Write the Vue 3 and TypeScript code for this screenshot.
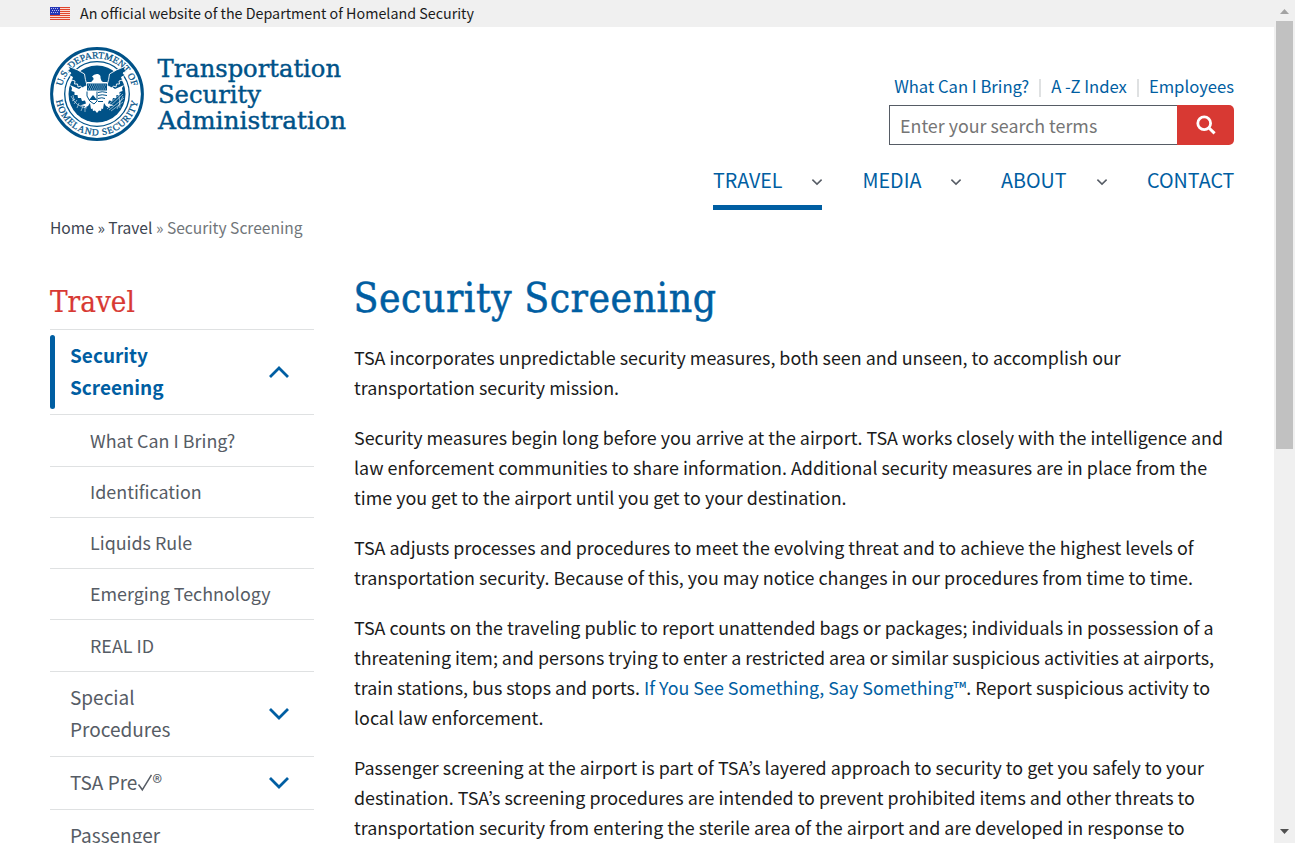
<script setup lang="ts">
interface SideItem { lines: string[]; kind: 'active' | 'child' | 'top'; mark?: string; height: number; arrow?: 'up' | 'down' }

const utility: string[] = ['What Can I Bring?', 'A -Z Index', 'Employees']
const nav = [
  { label: 'TRAVEL', sub: true, width: 109, active: true },
  { label: 'MEDIA', sub: true, width: 98.5, active: false },
  { label: 'ABOUT', sub: true, width: 106, active: false },
  { label: 'CONTACT', sub: false, width: 87, active: false },
]
const side: SideItem[] = [
  { lines: ['Security', 'Screening'], kind: 'active', height: 85, arrow: 'up' },
  { lines: ['What Can I Bring?'], kind: 'child', height: 52 },
  { lines: ['Identification'], kind: 'child', height: 51 },
  { lines: ['Liquids Rule'], kind: 'child', height: 51 },
  { lines: ['Emerging Technology'], kind: 'child', height: 51 },
  { lines: ['REAL ID'], kind: 'child', height: 52 },
  { lines: ['Special', 'Procedures'], kind: 'top', height: 85, arrow: 'down' },
  { lines: ['TSA Pre'], kind: 'top', mark: '®', height: 53, arrow: 'down' },
  { lines: ['Passenger'], kind: 'top', height: 53 },
]
const stripes = [0, 2, 4, 6, 8, 10, 12]
</script>

<template>
  <div class="screen">
    <div class="page">
      <div class="banner">
        <svg class="flag" width="20" height="13" viewBox="0 0 20 13" shape-rendering="crispEdges">
          <rect width="20" height="13" fill="#fbd9d2" />
          <rect v-for="s in stripes" :key="s" x="0" :y="s" width="20" height="1" fill="#e0452c" />
          <rect width="10" height="8" fill="#2536b5" />
          <path d="M1 1.5h8M2 3.5h7M1 5.5h8" stroke="#b8bdf0" stroke-width="1" stroke-dasharray="1 1" />
        </svg>
        <span>An official website of the Department of Homeland Security</span>
      </div>

      <header class="header">
        <div class="brand">
          <svg class="seal" width="94" height="94" viewBox="-47 -47 94 94">
            <defs>
              <path id="arcTop" d="M-35.2 6A35.7 35.7 0 1 1 35.2 6" />
              <path id="arcBottom" d="M-41.4 0A41.4 41.4 0 0 0 41.4 0" />
            </defs>
            <circle r="45.4" fill="#fff" stroke="#005288" stroke-width="3" />
            <circle r="32.3" fill="none" stroke="#005288" stroke-width="1.3" />
            <circle r="28.5" fill="#005288" />
            <text class="ring" text-anchor="middle"><textPath href="#arcTop" startOffset="50%">U.S. DEPARTMENT OF</textPath></text>
            <text class="ring bottom" text-anchor="middle"><textPath href="#arcBottom" startOffset="50%">HOMELAND SECURITY</textPath></text>
            <g fill="#fff">
              <path d="M-27-9L-25-6-25.500-3-22.500-2-22.500 1-19.500 1-19 4-16 4-15 7-12 6.500-11 9.500-17 11.500-12 12-13 14-9 12-7 9-6 15-4.500 14.500-4 17-2 16.500 0 19 2 16.500 4 17 4.500 14.500 6 15 7 9 9 12 13 14 12 12 17 11.500 11 9.500 12 6.500 15 7 16 4 19 4 19.500 1 22.500 1 22.500-2 25.500-3 25-6 27-9 18-5 11-10 10-13-10-13-11-10-18-5Z" />
            </g>
            <path d="M-12-22Q0-27 12-22L11-12H-11Z" fill="#005288" />
            <path d="M-7-10L-5-13Q-3-14-3.500-16L-5-17.500Q-3-20.500 1-20 4-19 3.500-16 4-13 6-12L7-10Z" fill="#fff" />
            <path d="M-29-28Q-18-24-12.500-20-12-15-10-8.500L-15-6-16.500-8-19-7-19.500-10-22.500-10-22-13-25.500-14-24.500-17-28-18.500-26-21-29.500-23-27.500-25Z" fill="#005288" stroke="#fff" stroke-width=".9" />
            <path d="M29-28Q18-24 12.500-20 12-15 10-8.500L15-6 16.500-8 19-7 19.500-10 22.500-10 22-13 25.500-14 24.500-17 28-18.500 26-21 29.500-23 27.500-25Z" fill="#005288" stroke="#fff" stroke-width=".9" />
            <path d="M-10-10.500H10V-3.500H-10Z" fill="#005288" />
            <path d="M-9-9H9M-8-7H8M-9-5H9" stroke="#fff" stroke-width=".8" stroke-dasharray=".9 1.200" />
            <path d="M-10-2.500V2Q-8 8-3 10L0 7V-2.500M1-1.500Q5-3 10-1.500M1 1.500Q5 0 10 1.500M1 4.500Q5 3 8 4.500M1 7.500H6" fill="none" stroke="#005288" stroke-width="1" />
            <path d="M-8 6L-4 1 0 6Z" fill="#005288" />
            <path d="M-26 2Q-21 13-10 14M-25 7L-22 5M-23 10L-20 6M-20 14L-18 9M-16 17L-14 12M-24 1L-23 6M-12 18L-12 13M26 0L10 15M27 4L12 16M24-1L10 12M26 8L14 17M22 1L23 14M26 2L20 15" fill="none" stroke="#fff" stroke-width=".65" opacity=".85" />
          </svg>
          <svg class="wordmark" width="190" height="84" viewBox="0 0 190 84">
            <text x="0.500" y="25" textLength="183.500" lengthAdjust="spacingAndGlyphs">Transportation</text>
            <text x="1" y="51" textLength="103" lengthAdjust="spacingAndGlyphs">Security</text>
            <text x="1" y="77" textLength="188" lengthAdjust="spacingAndGlyphs">Administration</text>
          </svg>
        </div>
        <div class="tools">
          <ul class="utility">
            <li v-for="u in utility" :key="u"><a>{{ u }}</a></li>
          </ul>
          <div class="search">
            <div class="field">Enter your search terms</div>
            <div class="go">
              <svg width="20" height="20" viewBox="0 0 20 20" fill="none" stroke="#fff">
                <circle cx="8.2" cy="8.2" r="6.4" stroke-width="2.8" />
                <path d="M13 13L18.6 18.4" stroke-width="3" />
              </svg>
            </div>
          </div>
        </div>
      </header>

      <nav class="nav">
        <div v-for="n in nav" :key="n.label" class="nav-item" :class="{ on: n.active }" :style="{ width: n.width + 'px' }">
          <span>{{ n.label }}</span>
          <svg v-if="n.sub" width="12" height="8" viewBox="0 0 12 8"><path d="M1.4 1.6L6 6.1 10.6 1.6" fill="none" stroke="#565c65" stroke-width="1.5" /></svg>
        </div>
      </nav>

      <div class="crumbs"><a>Home</a> » <a>Travel</a> <span>» Security Screening</span></div>

      <div class="columns">
        <aside class="side">
          <h2>Travel</h2>
          <div v-for="s in side" :key="s.lines[0]" class="entry" :class="s.kind" :style="{ height: s.height + 'px' }">
            <div class="entry-text">
              <div v-for="l in s.lines" :key="l">{{ l }}<template v-if="s.mark"><svg class="check" width="15" height="18" viewBox="0 0 15 18"><path d="M1.5 10.5L5.3 15.8 14.5 1" fill="none" stroke="#565c65" stroke-width="1.5" /></svg><sup>{{ s.mark }}</sup></template></div>
            </div>
            <svg v-if="s.arrow" class="arrow" width="22" height="14" viewBox="0 0 22 14">
              <path :d="s.arrow === 'up' ? 'M2 12L11 3 20 12' : 'M2 2L11 11 20 2'" fill="none" stroke="#005ea2" stroke-width="2.8" />
            </svg>
          </div>
        </aside>

        <main class="main">
          <h1>Security Screening</h1>
          <p>TSA incorporates unpredictable security measures, both seen and unseen, to accomplish our<br>transportation security mission.</p>
          <p>Security measures begin long before you arrive at the airport. TSA works closely with the intelligence and<br>law enforcement communities to share information. Additional security measures are in place from the<br>time you get to the airport until you get to your destination.</p>
          <p>TSA adjusts processes and procedures to meet the evolving threat and to achieve the highest levels of<br>transportation security. Because of this, you may notice changes in our procedures from time to time.</p>
          <p>TSA counts on the traveling public to report unattended bags or packages; individuals in possession of a<br>threatening item; and persons trying to enter a restricted area or similar suspicious activities at airports,<br>train stations, bus stops and ports. <a>If You See Something, Say Something™</a>. Report suspicious activity to<br>local law enforcement.</p>
          <p>Passenger screening at the airport is part of TSA’s layered approach to security to get you safely to your<br>destination. TSA’s screening procedures are intended to prevent prohibited items and other threats to<br>transportation security from entering the sterile area of the airport and are developed in response to</p>
        </main>
      </div>
    </div>

    <div class="scrollbar">
      <svg width="9" height="5" viewBox="0 0 9 5"><path d="M0 5L4.5 0 9 5Z" fill="#a3a3a3" /></svg>
      <div class="thumb"></div>
      <svg class="down" width="9" height="5" viewBox="0 0 9 5"><path d="M0 0L4.5 5 9 0Z" fill="#505050" /></svg>
    </div>
  </div>
</template>

<style>
body { margin: 0; overflow: hidden; background: #fff; }
</style>

<style scoped>
.screen { display: flex; width: 1295px; height: 843px; overflow: hidden; background: #fff; color: #1b1b1b; font-family: "Noto Sans CJK KR", "Noto Sans", sans-serif; font-size: 17.9px; white-space: nowrap; }
.page { width: 1274px; height: 843px; overflow: hidden; }
.banner { display: flex; align-items: center; gap: 10px; height: 27px; padding-left: 50px; background: #f0f0f0; font-size: 14.3px; line-height: 25px; }
.banner span { height: 27px; }
.header { display: flex; justify-content: space-between; height: 128px; padding: 0 40px 0 50px; }
.brand { display: flex; gap: 13px; padding-top: 20px; }
.wordmark { margin-top: 5px; }
.wordmark text { font: 25px "DejaVu Serif Condensed", "DejaVu Serif", serif; fill: #005288; stroke: #005288; stroke-width: 0.4px; }
.ring { font: 9.5px "Liberation Serif", serif; fill: #005288; stroke: #005288; stroke-width: 0.25px; }
.ring.bottom { letter-spacing: 0.8px; }
.tools { padding-top: 46px; width: 345px; }
.utility { display: flex; justify-content: flex-end; margin: 0; padding: 0; list-style: none; font-size: 16.65px; line-height: 22px; height: 32px; color: #005ea2; }
.utility li { display: flex; align-items: center; height: 26px; padding-bottom: 3px; }
.utility li + li::before { content: ""; width: 2px; height: 18px; margin: 3px 10px 0; background: #dfe1e2; }
.search { display: flex; height: 40px; }
.field { box-sizing: border-box; width: 288px; border: 1px solid #565c65; border-right: 0; padding-left: 10px; font-size: 17.85px; line-height: 38px; color: #757575; }
.go { display: flex; align-items: center; justify-content: center; width: 57px; background: #d83933; border-radius: 0 5px 5px 0; }
.nav { display: flex; justify-content: flex-end; gap: 40px; height: 55px; padding-right: 40px; color: #005ea2; font-size: 19.7px; line-height: 50px; }
.nav-item { display: flex; justify-content: space-between; box-sizing: border-box; height: 55px; }
.nav-item svg { margin: 23px -1px 0 0; }
.on { margin-right: 0.5px; border-bottom: 5px solid #005ea2; }
.crumbs { padding: 5px 0 0 50px; height: 37px; font-size: 15.6px; line-height: 24px; color: #3d4551; }
.crumbs span { color: #71767a; }
.columns { display: flex; gap: 40px; padding-left: 50px; }
.side { width: 264px; padding-top: 24px; }
.side h2 { margin: 0; height: 53px; border-bottom: 1px solid #dfe1e2; font: 400 29.3px/52px "DejaVu Serif Condensed", "DejaVu Serif", serif; color: #d83933; -webkit-text-stroke: 0.2px; }
.entry { display: flex; justify-content: space-between; align-items: center; box-sizing: border-box; border-bottom: 1px solid #dfe1e2; padding: 0 24px 0 20px; font-size: 19px; line-height: 32px; color: #565c65; }
.entry-text { padding-bottom: 2px; }
.child { padding-left: 40px; font-size: 17.9px; }
.active { position: relative; font-weight: 700; color: #005ea2; }
.active::before { content: ""; position: absolute; left: 0; top: 5px; bottom: 5px; width: 5px; border-radius: 3px; background: #005ea2; }
.check { margin-bottom: -2px; }
.entry sup { font-size: 20px; line-height: 0; vertical-align: 0; }
.main { padding-top: 18px; }
.main h1 { margin: 0 0 16px -0.5px; font: 400 40.5px/56px "DejaVu Serif Condensed", "DejaVu Serif", serif; letter-spacing: 0.5px; color: #005ea2; -webkit-text-stroke: 0.5px; }
.main p { margin: 0 0 20px; line-height: 30px; }
.main a { color: #005ea2; }
.scrollbar { display: flex; flex-direction: column; align-items: center; box-sizing: border-box; width: 21px; height: 843px; padding: 9px 0; background: #f0f0f0; }
.thumb { width: 17px; height: 428px; margin-top: 7px; background: #c1c1c1; }
.down { margin-top: auto; }
</style>
